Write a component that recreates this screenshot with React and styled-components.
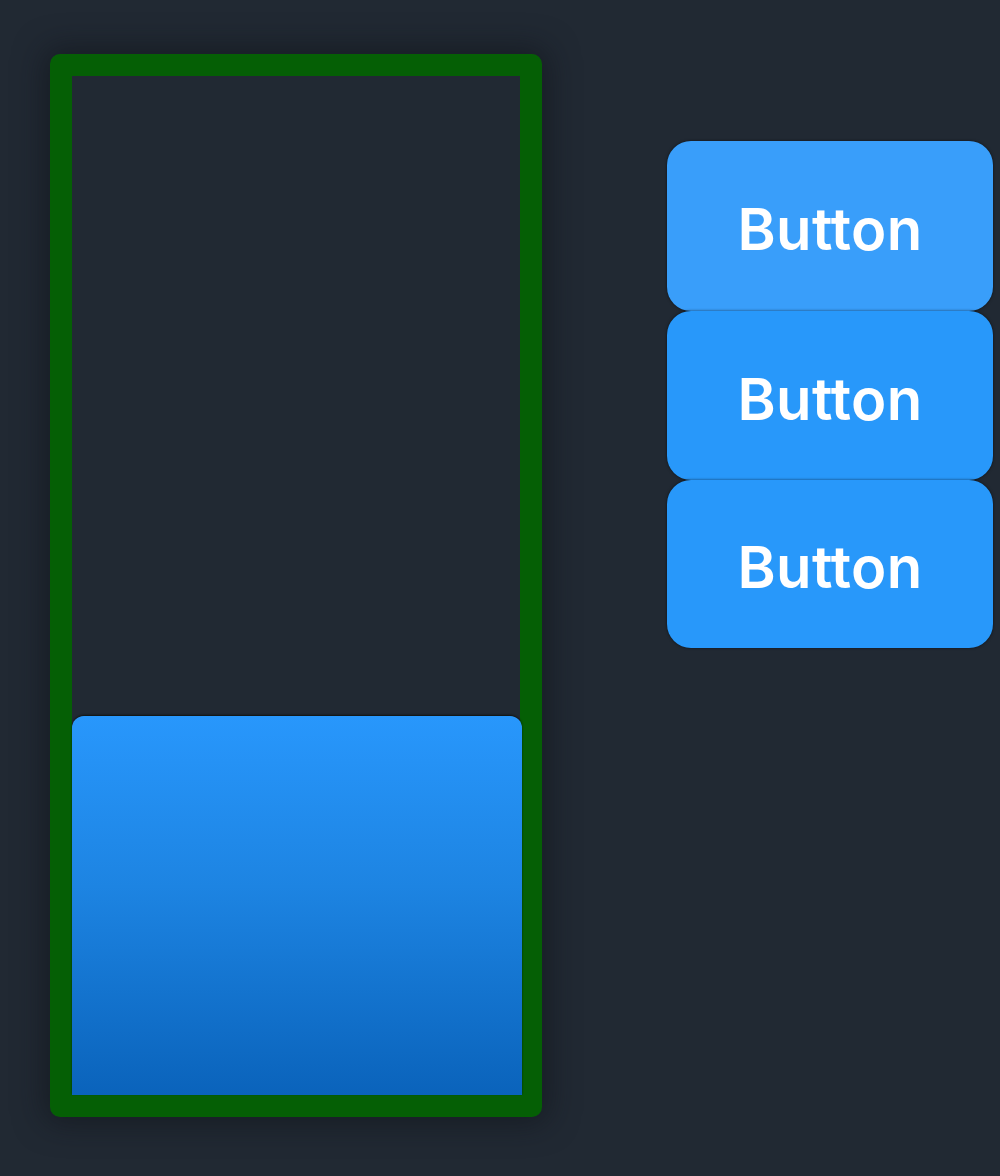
import React from "react";
import styled, { createGlobalStyle } from "styled-components";

const Global = createGlobalStyle`
  html, body { margin: 0; padding: 0; background: #212933; }
  body { font-family: Inter, "Liberation Sans", sans-serif; }
`;

const Page = styled.div`
  display: flex;
  align-items: flex-start;
  padding: 54px 0 0 50px;
  min-height: 1176px;
  box-sizing: border-box;
  background: #212933;
`;

const Tank = styled.div`
  width: 492px;
  height: 1063px;
  box-sizing: border-box;
  border: 22px solid #055f05;
  border-radius: 10px;
  display: flex;
  flex-direction: column;
  justify-content: flex-end;
  box-shadow: 0 0 30px 6px rgba(15, 18, 24, 0.55);
`;

const Fill = styled.div`
  height: ${(p) => p.$level}px;
  margin-right: -2px;
  border-radius: 12px 12px 0 0;
  background: linear-gradient(180deg, #2897fc 0%, #1d84e2 45%, #0a63bb 100%);
  box-shadow: 0 -1px 2px rgba(10, 10, 0, 0.7);
`;

const Column = styled.div`
  display: flex;
  flex-direction: column;
  margin: 87px 0 0 125px;
`;

const Button = styled.button`
  width: 326px;
  height: ${(p) => p.$h}px;
  border: none;
  border-radius: 24px;
  background: ${(p) => (p.$hover ? "#399efa" : "#2898fa")};
  color: #ffffff;
  font-family: Inter, "Liberation Sans", sans-serif;
  font-weight: 600;
  font-size: 58px;
  letter-spacing: 0.3px;
  display: flex;
  align-items: center;
  justify-content: center;
  padding: 6px 0 0 0;
  box-shadow: 0 0 3px rgba(0, 0, 0, 0.6);
  cursor: pointer;
`;

export default function App() {
  return (
    <>
      <Global />
      <Page>
        <Tank>
          <Fill $level={379} />
        </Tank>
        <Column>
          <Button $hover $h={170}>Button</Button>
          <Button $h={169}>Button</Button>
          <Button $h={168}>Button</Button>
        </Column>
      </Page>
    </>
  );
}
